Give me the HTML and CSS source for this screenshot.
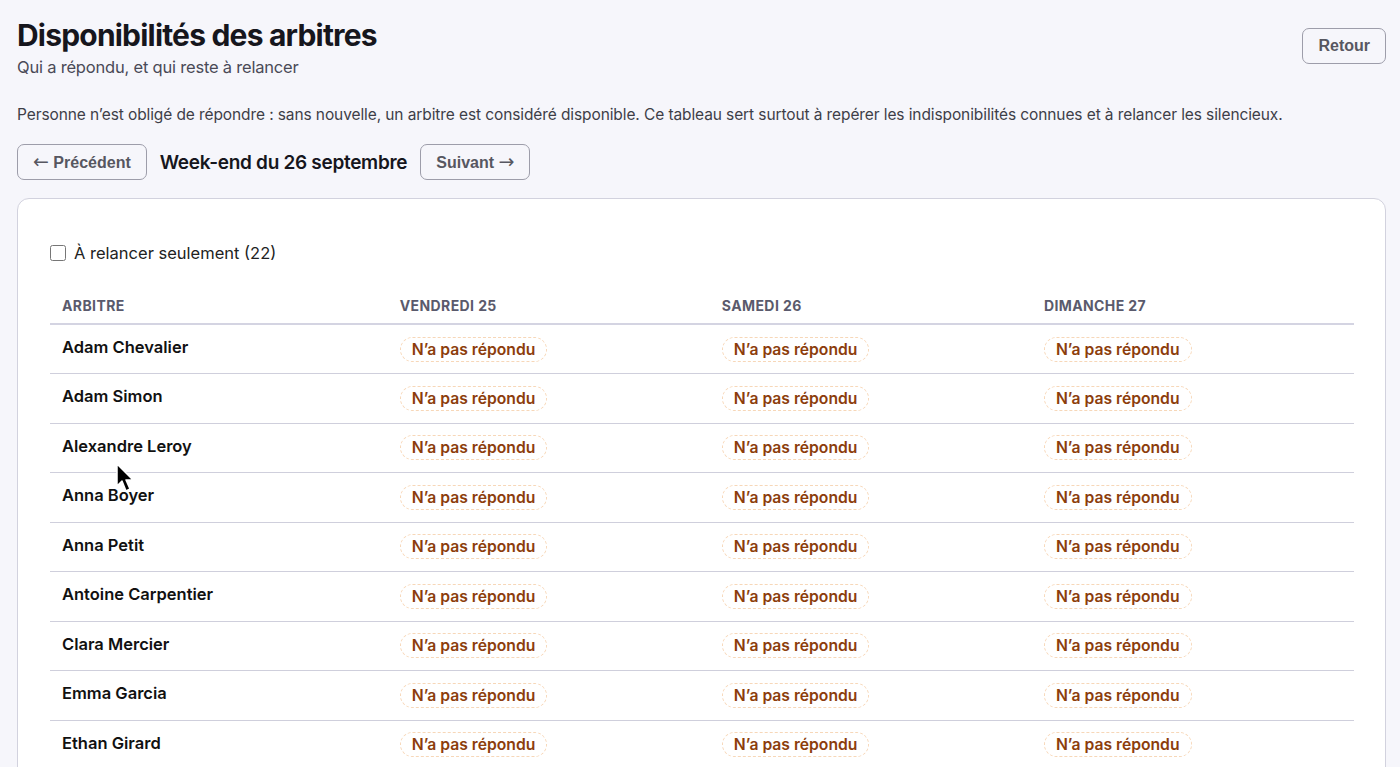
FILE: index.html
```html
<!DOCTYPE html>
<html lang="fr">
<head>
  <meta charset="UTF-8">
  <title>Disponibilités des arbitres</title>
  <link rel="stylesheet" href="styles.css">
</head>
<body>
  <div class="page">
    <header class="page-header">
      <div>
        <h1>Disponibilités des arbitres</h1>
        <p class="subtitle">Qui a répondu, et qui reste à relancer</p>
      </div>
      <button class="btn">Retour</button>
    </header>

    <p class="intro">Personne n’est obligé de répondre : sans nouvelle, un arbitre est considéré disponible. Ce tableau sert surtout à repérer les indisponibilités connues et à relancer les silencieux.</p>

    <div class="week-nav">
      <button class="btn"><span class="arrow">←</span> Précédent</button>
      <span class="week-label">Week-end du 26 septembre</span>
      <button class="btn">Suivant <span class="arrow">→</span></button>
    </div>

    <div class="card">
      <label class="filter">
        <input type="checkbox">
        <span>À relancer seulement (22)</span>
      </label>

      <table class="dispos">
        <thead>
          <tr>
            <th class="col-name">Arbitre</th>
            <th>Vendredi 25</th>
            <th>Samedi 26</th>
            <th>Dimanche 27</th>
          </tr>
        </thead>
        <tbody id="rows"></tbody>
      </table>
    </div>
  </div>

  <!-- pointeur de souris -->
  <svg class="cursor" width="22" height="30" viewBox="0 0 22 30">
    <path d="M1 1 L1 23 L6 18 L10 28 L14 26 L10 17 L17 17 Z" fill="#000" stroke="#fff" stroke-width="1.5" stroke-linejoin="round"/>
  </svg>

  <script>
    // Liste des arbitres du week-end
    var arbitres = [
      "Adam Chevalier", "Adam Simon", "Alexandre Leroy", "Anna Boyer", "Anna Petit",
      "Antoine Carpentier", "Clara Mercier", "Emma Garcia", "Ethan Girard"
    ];
    var tbody = document.getElementById("rows");
    arbitres.forEach(function (nom) {
      var tr = document.createElement("tr");
      var html = '<td class="col-name">' + nom + '</td>';
      for (var j = 0; j < 3; j++) {
        html += '<td><span class="badge">N’a pas répondu</span></td>';
      }
      tr.innerHTML = html;
      tbody.appendChild(tr);
    });
  </script>
</body>
</html>
```

FILE: styles.css
```css
/* Styles généraux */
* {
  box-sizing: border-box;
}
body {
  margin: 0;
  background: #f6f6fb;
  font-family: 'Inter', 'Lato', sans-serif;
  color: #16161d;
}
.page {
  padding: 15px 14px 0 17px;
}
.page-header {
  display: flex;
  justify-content: space-between;
  align-items: flex-start;
}
h1 {
  margin: 0;
  font-size: 30px;
  font-weight: 700;
  letter-spacing: -0.8px;
  line-height: 40px;
}
.subtitle {
  margin: 0;
  font-size: 16.5px;
  color: #4a4a57;
  line-height: 24px;
  letter-spacing: -0.2px;
}
.btn {
  font-family: 'Liberation Sans', Arial, sans-serif;
  font-weight: 700;
  font-size: 16px;
  color: #575761;
  background: #f6f6fb;
  border: 1px solid #9d9daa;
  border-radius: 7px;
  padding: 0 15px;
  height: 36px;
}
.btn .arrow {
  font-family: 'DejaVu Sans', sans-serif;
  font-weight: 400;
  font-size: 19px;
  line-height: 1;
}
.page-header .btn {
  margin-top: 13px;
}
.intro {
  margin: 26px 0 20px;
  font-size: 15.5px;
  color: #3e3e48;
  letter-spacing: -0.1px;
}
.week-nav {
  display: flex;
  align-items: center;
  gap: 13px;
}
.week-label {
  font-size: 19px;
  font-weight: 600;
  letter-spacing: -0.3px;
}
/* Carte du tableau */
.card {
  margin-top: 18px;
  background: #fff;
  border: 1px solid #d2d2de;
  border-radius: 12px;
  padding: 44px 31px 0 32px;
  min-height: 600px;
}
.filter {
  display: flex;
  align-items: center;
  gap: 8px;
  font-size: 16.5px;
  color: #222;
}
.filter input {
  margin: 0;
  width: 16px;
  height: 16px;
}
.dispos {
  width: 100%;
  border-collapse: collapse;
  margin-top: 34px;
}
.dispos th {
  text-align: left;
  text-transform: uppercase;
  font-size: 14px;
  font-weight: 700;
  letter-spacing: 0.4px;
  color: #5a5a6c;
  padding: 0 12px 9px;
  border-bottom: 2px solid #d4d4e2;
  width: 24.7%;
}
.dispos th.col-name {
  width: 25.9%;
}
.dispos td {
  padding: 0 12px;
  height: 49.5px;
  border-bottom: 1px solid #cfcfdc;
  vertical-align: middle;
}
.dispos td.col-name {
  font-size: 16.5px;
  font-weight: 600;
  color: #111;
  padding-bottom: 4px;
}
.badge {
  display: inline-block;
  font-size: 15.7px;
  font-weight: 600;
  color: #8c3d0c;
  border: 1px dashed #f7d7b8;
  border-radius: 14px;
  padding: 2px 11px;
}
.cursor {
  position: absolute;
  left: 116px;
  top: 463px;
}
```
